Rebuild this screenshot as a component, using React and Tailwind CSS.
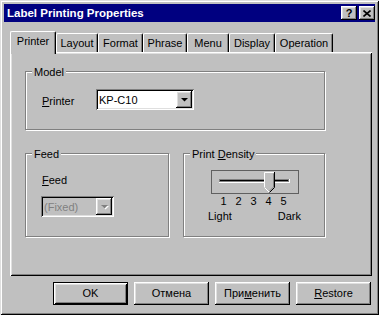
import React from "react";

const raised =
  "shadow-[inset_-1px_-1px_#000,inset_1px_1px_#fff,inset_-2px_-2px_#808080,inset_2px_2px_#dfdfdf]";
const sunken =
  "shadow-[inset_1px_1px_#808080,inset_-1px_-1px_#fff,inset_2px_2px_#000,inset_-2px_-2px_#dfdfdf]";

const tabs = [
  ["Printer", 46],
  ["Layout", 42],
  ["Format", 45],
  ["Phrase", 44],
  ["Menu", 42],
  ["Display", 46],
  ["Operation", 58],
];

function Arrow({ disabled }) {
  return (
    <svg width="9" height="6" viewBox="0 0 9 6">
      {disabled && <path d="M2 2h7L5.5 5.5z" fill="#fff" />}
      <path d="M1 1h7L4.5 4.5z" fill={disabled ? "#808080" : "#000"} />
    </svg>
  );
}

function Combo({ value, width, disabled }) {
  return (
    <div
      className={`flex items-center h-[21px] ${sunken} ${disabled ? "bg-[#c0c0c0] text-[#808080]" : "bg-white text-black"}`}
      style={{ width }}
    >
      <span className="flex-1 pl-[3px] pt-[1px]">{value}</span>
      <div className={`w-[16px] h-[17px] mr-[2px] flex items-center justify-center bg-[#c0c0c0] ${raised}`}>
        <Arrow disabled={disabled} />
      </div>
    </div>
  );
}

function GroupBox({ label, className, children }) {
  return (
    <div className={`relative border border-[#808080] shadow-[inset_1px_1px_#fff,1px_1px_#fff] ${className}`}>
      <span className="absolute left-[6px] top-[-6px] bg-[#c0c0c0] px-[2px] leading-[13px]">{label}</span>
      {children}
    </div>
  );
}

function Slider() {
  return (
    <svg width="88" height="24" viewBox="0 0 88 24">
      <rect x="0.5" y="0.5" width="87" height="23" fill="none" stroke="#000" strokeDasharray="1 1" />
      <rect x="8" y="9" width="71" height="4" fill="#fff" />
      <rect x="8" y="9" width="70" height="3" fill="#808080" />
      <rect x="9" y="10" width="68" height="1" fill="#000" />
      <path d="M53 2h11v15l-5.5 5.5L53 17z" fill="#c0c0c0" />
      <path d="M53.5 17V2.5h10" fill="none" stroke="#fff" />
      <path d="M63.5 2v15.5l-5 5" fill="none" stroke="#000" />
      <path d="M62.5 3.5v13.5l-4 4" fill="none" stroke="#808080" />
      <path d="M53.5 17.5l4.5 4.5" fill="none" stroke="#fff" />
    </svg>
  );
}

function Button({ children, isDefault }) {
  return (
    <div
      className={`w-[75px] h-[23px] flex items-center justify-center bg-[#c0c0c0] ${
        isDefault
          ? "border border-black shadow-[inset_1px_1px_#fff,inset_-1px_-1px_#000,inset_2px_2px_#dfdfdf,inset_-2px_-2px_#808080]"
          : raised
      }`}
    >
      {children}
    </div>
  );
}

export default function App() {
  return (
    <div className="w-[379px] h-[315px] bg-[#c0c0c0] p-[4px] flex flex-col font-['Liberation_Sans',Arial,sans-serif] text-[11px] leading-[13px] text-black shadow-[inset_1px_1px_#dfdfdf,inset_-1px_-1px_#000,inset_2px_2px_#fff,inset_-2px_-2px_#808080]">
      {/* title bar */}
      <div className="h-[18px] bg-[#000080] flex items-center pl-[3px]">
        <span className="flex-1 text-white font-bold text-[11.5px]">Label Printing Properties</span>
        <div className="flex gap-[2px]">
          <div className={`w-[16px] h-[14px] bg-[#c0c0c0] flex items-center justify-center font-bold text-[11px] leading-[11px] ${raised}`}>
            ?
          </div>
          <div className={`w-[16px] h-[14px] bg-[#c0c0c0] flex items-center justify-center ${raised}`}>
            <svg width="8" height="7" viewBox="0 0 8 7">
              <path d="M0.5 0.5l7 6M7.5 0.5l-7 6" stroke="#000" strokeWidth="1.6" />
            </svg>
          </div>
        </div>
      </div>

      {/* tabs */}
      <div className="flex items-end h-[21px] mt-[9px] ml-[6px]">
        {tabs.map(([name, w], i) =>
          i === 0 ? (
            <div
              key={name}
              style={{ width: w }}
              className="relative z-10 h-[23px] -mb-[2px] pb-[4px] flex items-center justify-center bg-[#c0c0c0] border-t border-l border-r border-t-white border-l-white border-r-black rounded-t-[2px] shadow-[inset_-1px_0_#808080]"
            >
              {name}
            </div>
          ) : (
            <div
              key={name}
              style={{ width: w }}
              className="h-[19px] flex items-center justify-center border-t border-l border-r border-t-white border-l-white border-r-black rounded-t-[2px] shadow-[inset_-1px_0_#808080]"
            >
              {name}
            </div>
          )
        )}
      </div>

      {/* panel */}
      <div className="w-[362px] h-[224px] ml-[6px] pl-[15px] pt-[19px] shadow-[inset_1px_1px_#fff,inset_-1px_-1px_#000,inset_2px_2px_#dfdfdf,inset_-2px_-2px_#808080]">
        <GroupBox label="Model" className="w-[300px] h-[59px]">
          <div className="flex items-start pt-[17px] pl-[16px]">
            <span className="w-[54px] mt-[6px]">
              <u>P</u>rinter
            </span>
            <Combo value="KP-C10" width={98} />
          </div>
        </GroupBox>

        <div className="flex gap-[14px] mt-[23px]">
          <GroupBox label="Feed" className="w-[144px] h-[84px]">
            <div className="pt-[20px] pl-[16px]">
              <u>F</u>eed
            </div>
            <div className="pl-[15px] mt-[9px]">
              <Combo value="(Fixed)" width={73} disabled />
            </div>
          </GroupBox>

          <GroupBox
            label={
              <>
                Print <u>D</u>ensity
              </>
            }
            className="w-[142px] h-[84px]"
          >
            <div className="pt-[16px] pl-[27px]">
              <Slider />
            </div>
            <div className="grid grid-cols-[repeat(5,15px)] ml-[32px] mt-[1px]">
              {[1, 2, 3, 4, 5].map((n) => (
                <span key={n} className="text-center">
                  {n}
                </span>
              ))}
            </div>
            <div className="flex justify-between w-[93px] ml-[24px] mt-[2px]">
              <span>Light</span>
              <span>Dark</span>
            </div>
          </GroupBox>
        </div>
      </div>

      {/* buttons */}
      <div className="flex justify-end gap-[6px] mt-[6px] mr-[4px]">
        <Button isDefault>OK</Button>
        <Button>Отмена</Button>
        <Button>
          <span>
            При<u>м</u>енить
          </span>
        </Button>
        <Button>
          <span>
            <u>R</u>estore
          </span>
        </Button>
      </div>
    </div>
  );
}
